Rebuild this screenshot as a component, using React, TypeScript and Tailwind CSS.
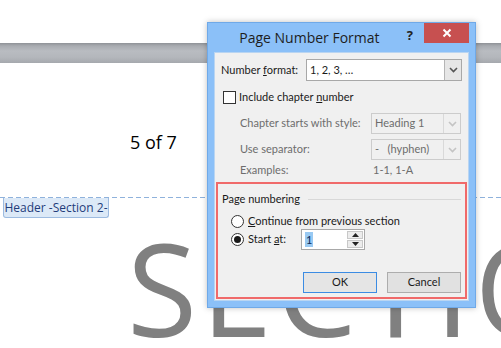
const ui = "font-['Open_Sans',sans-serif]";
const body = "font-['Lato','Open_Sans',sans-serif]";

const Chevron = ({ color = "#444" }: { color?: string }) => (
  <svg width="9" height="6" viewBox="0 0 9 6">
    <path d="M1 1 L4.5 4.5 L8 1" fill="none" stroke={color} strokeWidth="1.6" />
  </svg>
);

const Combo = ({ value, disabled, className }: { value: string; disabled?: boolean; className: string }) => (
  <div
    className={`flex h-full items-stretch border ${
      disabled ? "border-[#cccccc] bg-[#f0f0f0] text-[#6d6d6d]" : "border-[#a8a8a8] bg-white text-[#1a1a1a]"
    } ${className}`}
  >
    <div className="flex flex-1 items-center pl-[3px] whitespace-pre">{value}</div>
    <div
      className={`flex w-[17px] items-center justify-center border-l ${
        disabled ? "border-[#d9d9d9] bg-[#f0f0f0]" : "border-[#b5b5b5] bg-[#e6e6e6]"
      }`}
    >
      <Chevron color={disabled ? "#c4c4c4" : "#555"} />
    </div>
  </div>
);

const Radio = ({ on }: { on?: boolean }) => (
  <div className="flex h-[13px] w-[13px] shrink-0 items-center justify-center rounded-full border border-[#333] bg-white">
    {on && <div className="h-[7px] w-[7px] rounded-full bg-[#1a1a1a]" />}
  </div>
);

const Dialog = () => (
  <div className="absolute left-[207px] top-[22px] flex h-[286px] w-[269px] flex-col border border-[#6fa9e8] bg-[#8bc0f8] shadow-[0_0_6px_rgba(0,0,0,0.25)]">
    <div className="flex h-[29px] items-start">
      <div className={`flex h-[28px] flex-1 items-center justify-center pl-[4px] text-[14px] text-[#1e1e1e] ${ui}`}>
        Page Number Format
      </div>
      <div className={`mt-[3px] mr-[11px] text-[13px] font-bold text-[#222] ${ui}`}>?</div>
      <div className="mr-[6px] flex h-[20px] w-[45px] items-center justify-center bg-[#c75050]">
        <svg width="10" height="10" viewBox="0 0 10 10">
          <path d="M1.5 1.5 L8.5 8.5 M8.5 1.5 L1.5 8.5" stroke="#fff" strokeWidth="2" />
        </svg>
      </div>
    </div>
    <div className={`mx-[6px] mb-[6px] flex-1 whitespace-nowrap border border-[#b9d5f2] bg-[#f0f0f0] px-[6px] pt-[6px] text-[11px] text-[#1a1a1a] ${body}`}>
      <div className="flex h-[22px] items-center">
        <span>
          Number <u>f</u>ormat:
        </span>
        <Combo value="1, 2, 3, …" className="ml-auto w-[156px]" />
      </div>
      <div className="mt-[10px] flex h-[13px] items-center">
        <div className="ml-[2px] h-[13px] w-[13px] border border-[#333] bg-white" />
        <span className="ml-[3px]">
          Include chapter <u>n</u>umber
        </span>
      </div>
      <div className="mt-[9px] flex h-[21px] items-center text-[#6d6d6d]">
        <span className="pl-[19px]">Chapter starts with style:</span>
        <Combo value="Heading 1" disabled className="ml-auto mr-[1px] w-[90px]" />
      </div>
      <div className="mt-[5px] flex h-[21px] items-center text-[#6d6d6d]">
        <span className="pl-[19px]">Use separator:</span>
        <Combo value="-   (hyphen)" disabled className="ml-auto mr-[1px] w-[90px]" />
      </div>
      <div className="flex h-[20px] items-center text-[#6d6d6d]">
        <span className="w-[152px] pl-[19px]">Examples:</span>
        <span>1-1, 1-A</span>
      </div>
      <div className="-mx-[5px] mt-[2px] h-[117px] border-2 border-[#f06a6a] px-[4px] pt-[8px]">
        <div className="flex h-[14px] items-center">
          <span>Page numbering</span>
          <div className="ml-[8px] h-px flex-1 bg-[#d8d8d8]" />
        </div>
        <div className="mt-[8px] flex h-[14px] items-center pl-[9px]">
          <Radio />
          <span className="ml-[4px]">
            <u>C</u>ontinue from previous section
          </span>
        </div>
        <div className="mt-px flex h-[21px] items-center pl-[9px]">
          <Radio on />
          <span className="ml-[4px] w-[53px]">
            Start <u>a</u>t:
          </span>
          <div className="flex h-full w-[64px] items-stretch border border-[#a8a8a8] bg-white">
            <div className="flex flex-1 items-center pl-[3px]">
              <span className="bg-[#99c9f2] px-px leading-[15px] text-[#0c2a56]">1</span>
            </div>
            <div className="my-[1px] mr-[1px] flex w-[16px] flex-col gap-px">
              <div className="flex flex-1 items-center justify-center border border-[#c8c8c8] bg-[#ececec]">
                <svg width="7" height="4" viewBox="0 0 7 4">
                  <path d="M0 4 L3.5 0 L7 4 Z" fill="#222" />
                </svg>
              </div>
              <div className="flex flex-1 items-center justify-center border border-[#c8c8c8] bg-[#ececec]">
                <svg width="7" height="4" viewBox="0 0 7 4">
                  <path d="M0 0 L3.5 4 L7 0 Z" fill="#222" />
                </svg>
              </div>
            </div>
          </div>
        </div>
        <div className="mt-[22px] flex justify-end gap-[10px]">
          <div className="flex h-[21px] w-[74px] items-center justify-center border border-[#3c8ce3] bg-[#e5e5e5]">
            OK
          </div>
          <div className="flex h-[21px] w-[74px] items-center justify-center border border-[#adadad] bg-[#e1e1e1]">
            Cancel
          </div>
        </div>
      </div>
    </div>
  </div>
);

export default function App() {
  return (
    <div className="relative h-[348px] w-[501px] overflow-hidden bg-white">
      <div className="pt-[43px]">
        <div className="h-[20px] bg-[linear-gradient(#8f9297_0px,#a9acb1_3px,#b9bcc1_8px,#b4b7bc_14px,#a5a8ad_20px)]" />
        <div className={`ml-[130px] mt-[67px] text-[18px] leading-[24px] text-black ${ui}`}>5 of 7</div>
        <div className="mt-[43px] h-px bg-[repeating-linear-gradient(90deg,#8fb2dc_0px,#8fb2dc_5px,transparent_5px,transparent_8px)]" />
        <div
          className={`ml-[3px] flex h-[20px] w-[106px] items-center justify-center rounded-b-[3px] border border-t-0 border-[#9dbbe0] bg-[#dce9f7] text-[12px] text-[#1f3c7a] ${ui}`}
        >
          Header -Section 2-
        </div>
        <div className={`ml-[127px] mt-[6px] whitespace-nowrap text-[128px] font-medium leading-none tracking-[0.03em] text-[#808080] ${ui}`}>
          SECTION 2
        </div>
      </div>
      <Dialog />
    </div>
  );
}
